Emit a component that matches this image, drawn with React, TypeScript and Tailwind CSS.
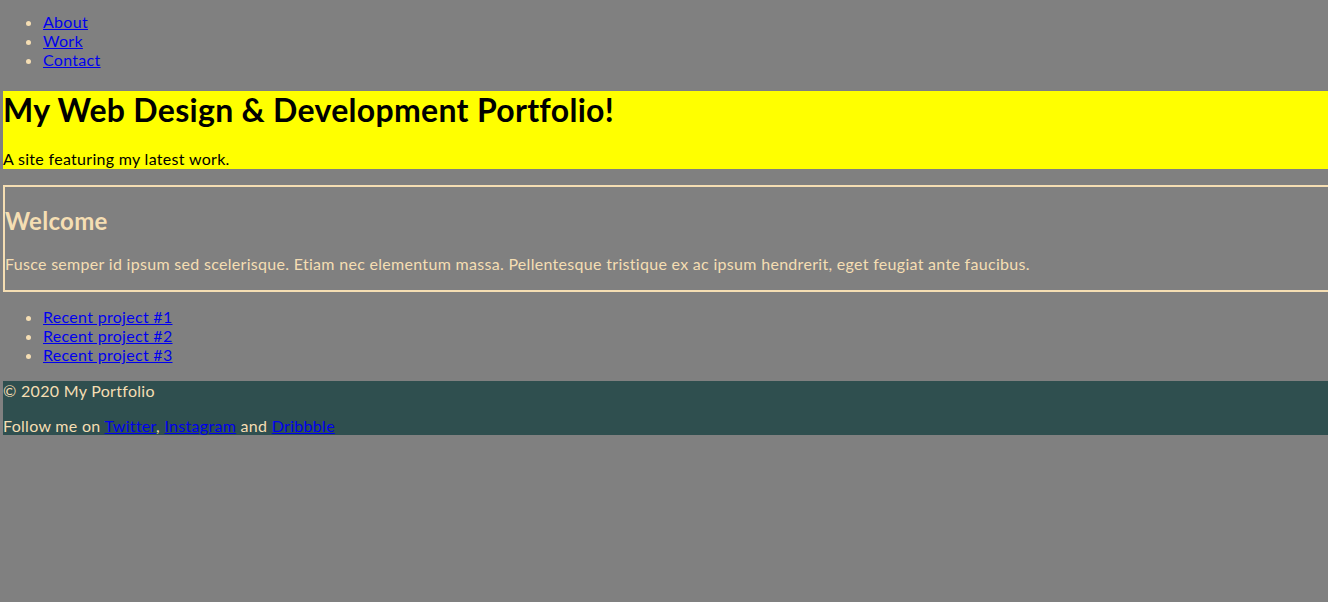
const NAV = ['About', 'Work', 'Contact'];
const PROJECTS = ['Recent project #1', 'Recent project #2', 'Recent project #3'];

const linkCls = 'text-[#0000ee] underline';

export default function App() {
  return (
    <div
      className="min-h-screen bg-[#808080] text-[#f5deb3] pl-[3px] pt-[12px] text-[16px] leading-[19px] tracking-[0.3px]"
      style={{ fontFamily: '"Trebuchet MS", Lato, sans-serif' }}
    >
      <nav>
        <ul className="list-disc pl-10">
          {NAV.map((item) => (
            <li key={item}>
              <a href="#" className={linkCls}>{item}</a>
            </li>
          ))}
        </ul>
      </nav>

      <header className="mt-[22px] bg-[#ffff00] text-black">
        <h1 className="text-[32px] leading-[37px] font-bold">My Web Design &amp; Development Portfolio!</h1>
        <p className="mt-[21px] leading-[20px]">A site featuring my latest work.</p>
      </header>

      <section className="mt-4 border-y-2 border-l-2 border-[#f5deb3] pt-5 pb-[17px]">
        <h2 className="text-[24px] leading-[28px] font-bold">Welcome</h2>
        <p className="mt-[19px]">
          Fusce semper id ipsum sed scelerisque. Etiam nec elementum massa. Pellentesque tristique ex ac ipsum hendrerit, eget feugiat ante faucibus.
        </p>
      </section>

      <ul className="mt-[15px] list-disc pl-10">
        {PROJECTS.map((item) => (
          <li key={item}>
            <a href="#" className={linkCls}>{item}</a>
          </li>
        ))}
      </ul>

      <footer className="mt-[17px] bg-[#2f4f4f]">
        <p>© 2020 My Portfolio</p>
        <p className="mt-4">
          Follow me on <a href="#" className={linkCls}>Twitter</a>, <a href="#" className={linkCls}>Instagram</a> and{' '}
          <a href="#" className={linkCls}>Dribbble</a>
        </p>
      </footer>
    </div>
  );
}
